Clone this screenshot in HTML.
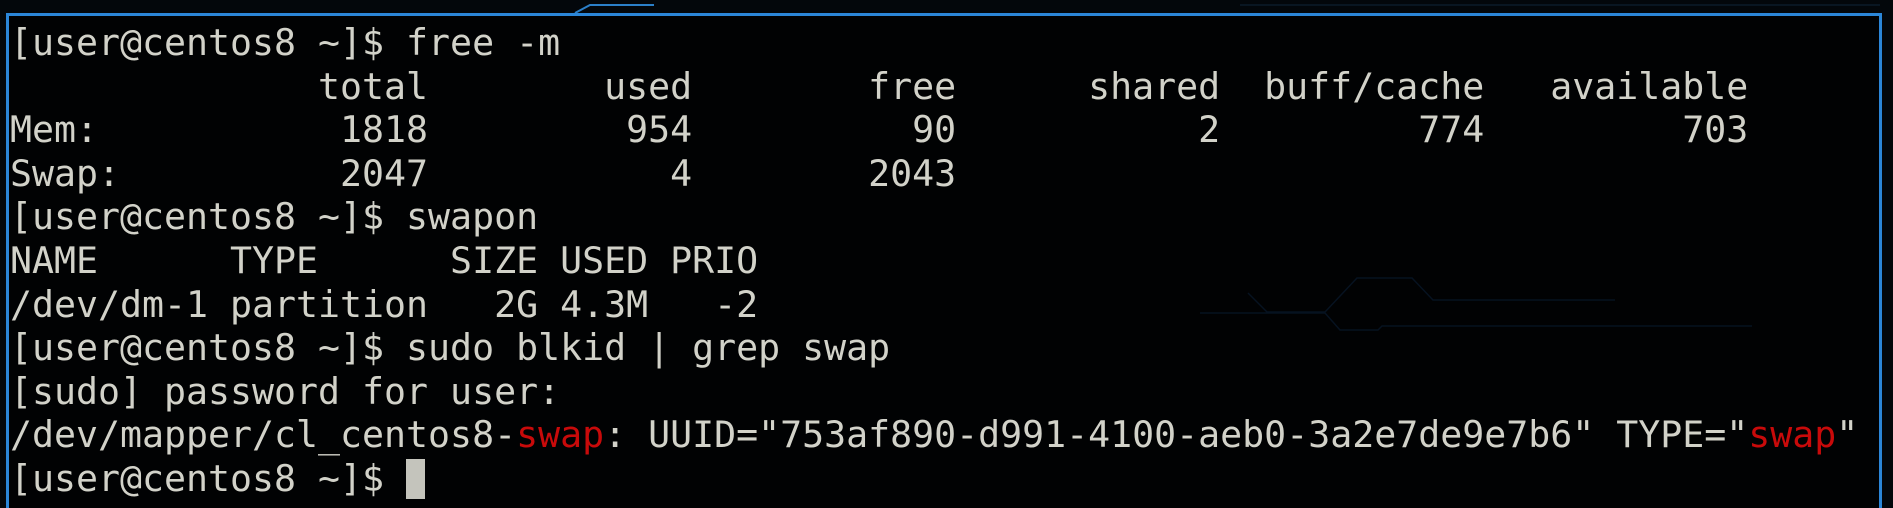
<!DOCTYPE html>
<html><head><meta charset="utf-8"><style>
html{margin:0;padding:0;width:1893px;height:508px;overflow:hidden;background:#03070b;}
body{margin:0;padding:0;width:1893px;height:508px;position:relative;overflow:hidden;background:#03070b;}
#frame{position:absolute;left:6px;top:13px;right:11px;bottom:-10px;border:3px solid #2b86d8;border-bottom:none;background:#010203;}
svg{position:absolute;left:0;top:0;}
pre{position:absolute;left:10px;top:21px;margin:0;font-family:"DejaVu Sans Mono","Liberation Mono",monospace;font-size:36.55px;line-height:43.6px;color:#d2d2c9;}
.r{color:#c80a0a;}
.cur{display:inline-block;width:19px;height:40px;background:#c4c4bc;vertical-align:-8px;}
</style></head><body>
<svg width="1893" height="508">
<path d="M575 13 L590 5 L654 5" stroke="#2b7fc8" stroke-width="2" fill="none"/>
<path d="M1240 5 L1880 5" stroke="#0f2438" stroke-width="1" fill="none"/>
</svg>
<div id="frame"></div>
<svg width="1893" height="508">
<path d="M1248 293 L1267 312 L1325 312 L1357 278 L1412 278 L1433 300 L1615 300 M1200 313 L1325 313 L1340 330 L1378 330 L1382 326 L1752 326" stroke="#061220" stroke-width="1.5" fill="none"/>
</svg>
<pre>[user@centos8 ~]$ free -m
              total        used        free      shared  buff/cache   available
Mem:           1818         954          90           2         774         703
Swap:          2047           4        2043
[user@centos8 ~]$ swapon
NAME      TYPE      SIZE USED PRIO
/dev/dm-1 partition   2G 4.3M   -2
[user@centos8 ~]$ sudo blkid | grep swap
[sudo] password for user:
/dev/mapper/cl_centos8-<span class="r">swap</span>: UUID="753af890-d991-4100-aeb0-3a2e7de9e7b6" TYPE="<span class="r">swap</span>"
[user@centos8 ~]$ <span class="cur"></span></pre>
</body></html>
